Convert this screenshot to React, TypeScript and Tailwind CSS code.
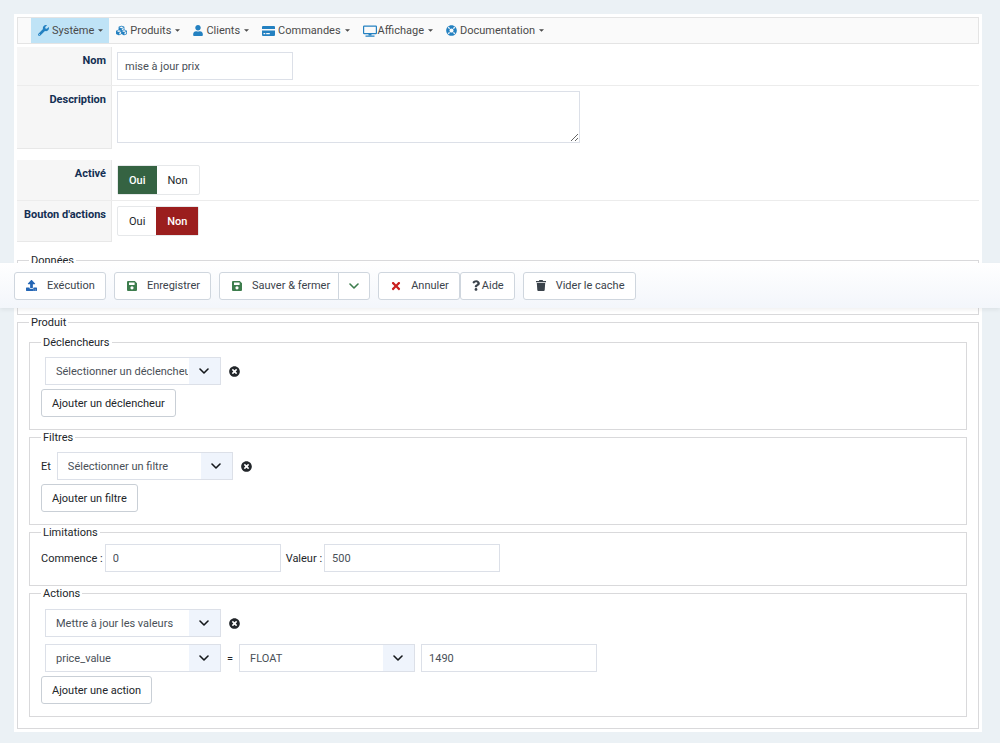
import type { ReactNode } from "react";
import { FaCubes, FaLifeRing, FaQuestion, FaTimes, FaTimesCircle, FaUpload, FaUser, FaWrench } from "react-icons/fa";

const CardIcon = () => (
  <svg viewBox="0 0 13 10" className="h-[10px] w-[13px]" fill="currentColor" aria-hidden="true">
    <path d="M1 0h11a1 1 0 0 1 1 1v2H0V1a1 1 0 0 1 1-1ZM0 4.600h13V9a1 1 0 0 1-1 1H1a1 1 0 0 1-1-1V4.600ZM1.500 7v1.200h1.800V7Zm2.700 0v1.200h3.600V7Z" fillRule="evenodd" />
  </svg>
);

const DisplayIcon = () => (
  <svg viewBox="0 0 14 12" className="h-3 w-[14px]" fill="none" stroke="currentColor" aria-hidden="true">
    <rect x="0.600" y="1.100" width="12.800" height="7.600" rx="0.600" strokeWidth="1.200" />
    <path d="M5.500 9.700h3M2.500 11.200h9" strokeWidth="1.300" />
  </svg>
);

const SaveIcon = () => (
  <svg viewBox="0 0 10 10" className="size-[10px] text-[#3d7d4d]" fill="currentColor" aria-hidden="true">
    <path fillRule="evenodd" d="M1 0h6.800L10 2.200V9a1 1 0 0 1-1 1H1a1 1 0 0 1-1-1V1a1 1 0 0 1 1-1Zm1 1.500v2.400h5.600V1.500ZM5 5.200a1.600 1.600 0 1 0 0 3.200 1.600 1.600 0 0 0 0-3.200Z" />
  </svg>
);

const TrashIcon = () => (
  <svg viewBox="0 0 10 11" className="h-[11px] w-[10px]" fill="currentColor" aria-hidden="true">
    <path d="M3.400 0h3.200l.5.900H10v1.300H0V.9h2.900ZM.8 3h8.400l-.5 7.100a1 1 0 0 1-1 .9H2.300a1 1 0 0 1-1-.9Z" />
  </svg>
);

const Chevron = ({ className }: { className: string }) => (
  <svg viewBox="0 0 10 6" className={className} fill="none" stroke="currentColor" strokeWidth="1.600" strokeLinecap="round" strokeLinejoin="round" aria-hidden="true">
    <path d="M1 1l4 4 4-4" />
  </svg>
);

function MenuItem({ icon, label, active, tight }: { icon: ReactNode; label: string; active?: boolean; tight?: boolean }) {
  return (
    <li className="flex">
      <a href="#" className={`flex items-center pr-[6px] pl-[7px] ${active ? "bg-[#bfe3f6]" : ""}`}>
        <span className={`text-[#2481c1] ${tight ? "mr-px" : "mr-[3px]"}`}>{icon}</span>
        {label}
        <svg viewBox="0 0 6 3" className="ml-1 h-[3px] w-[5px]" fill="currentColor" aria-hidden="true">
          <path d="M0 0h6L3 3z" />
        </svg>
      </a>
    </li>
  );
}

function Row({ label, htmlFor, last, children }: { label: string; htmlFor?: string; last?: boolean; children: ReactNode }) {
  const labelClass = "font-bold text-[#132f53]";
  return (
    <div className={`flex border-b ${last ? "border-transparent" : "border-[#ececec]"}`}>
      <div className={`w-[95px] shrink-0 border-r border-[#e8e8e8] bg-[#f6f6f6] pt-[6px] pr-[5px] text-right ${last ? "-mb-px border-b" : ""}`}>
        {htmlFor ? <label htmlFor={htmlFor} className={labelClass}>{label}</label> : <span className={labelClass}>{label}</span>}
      </div>
      <div className="grow px-[5px] py-[5px]">{children}</div>
    </div>
  );
}

function YesNo({ name, label, value }: { name: string; label: string; value: boolean }) {
  const base = "flex cursor-pointer items-center px-[11px] has-[:focus-visible]:outline-2";
  return (
    <div role="radiogroup" aria-label={label} className="flex h-[30px] w-fit rounded-[2px] border border-[#e6e8ea]">
      <label className={`${base} has-checked:bg-[#356342] has-checked:font-medium has-checked:text-white`}>
        <input type="radio" name={name} defaultChecked={value} className="sr-only" />
        Oui
      </label>
      <label className={`${base} has-checked:bg-[#9b1e1e] has-checked:font-medium has-checked:text-white`}>
        <input type="radio" name={name} defaultChecked={!value} className="sr-only" />
        Non
      </label>
    </div>
  );
}

const toolButton = "flex h-7 items-center rounded-[3px] border border-[#cfd6de] bg-white text-[#3b434b]";

function Group({ title, className, children }: { title: string; className: string; children?: ReactNode }) {
  return (
    <fieldset className={`min-w-0 border border-[#d9d9db] px-[11px] ${className}`}>
      <legend className="px-[2px]">{title}</legend>
      {children}
    </fieldset>
  );
}

function Select({ label, options }: { label: string; options: string[] }) {
  return (
    <div className="relative h-7 w-44 shrink-0">
      <select aria-label={label} className="h-full w-full appearance-none border border-[#dce0e8] bg-white pr-8 pl-[10px] text-[#495057]">
        {options.map((o) => (
          <option key={o}>{o}</option>
        ))}
      </select>
      <span className="pointer-events-none absolute inset-y-px right-px flex w-[31px] items-center bg-[#eff4fc] pl-[10px] text-[#15181b]">
        <Chevron className="h-[6px] w-[10px]" />
      </span>
    </div>
  );
}

const RemoveButton = () => (
  <button type="button" aria-label="Supprimer" className="ml-2">
    <FaTimesCircle className="size-[11px]" />
  </button>
);

const AddButton = ({ children }: { children: ReactNode }) => (
  <button type="button" className="mt-1 block h-7 rounded-[3px] border border-[#c9cfd6] bg-white px-[10px]">
    {children}
  </button>
);

const inputClass = "block h-7 w-44 border border-[#dce0e8] bg-white px-[7px] text-[#495057]";

export default function App() {
  return (
    <div className="relative min-h-screen bg-[#ebf1f5] pt-[14px] pr-[18px] pb-[11px] pl-[14px] font-['Roboto','Liberation_Sans',sans-serif] text-[11px] leading-[15px] text-[#22262a]">
      <main className="bg-white p-[3px]">
        <nav className="border border-[#e4e4e4] bg-[#fafafa] pl-[13px] text-[#4a4a4a]">
          <ul className="flex h-[25px]">
            <MenuItem active icon={<FaWrench className="size-[11px]" />} label="Système" />
            <MenuItem icon={<FaCubes className="size-[11px]" />} label="Produits" />
            <MenuItem icon={<FaUser className="h-[11px] w-[10px]" />} label="Clients" />
            <MenuItem icon={<CardIcon />} label="Commandes" />
            <MenuItem tight icon={<DisplayIcon />} label="Affichage" />
            <MenuItem icon={<FaLifeRing className="size-[11px]" />} label="Documentation" />
          </ul>
        </nav>

        <form onSubmit={(e) => e.preventDefault()}>
          <div className="mt-[3px]">
            <Row label="Nom" htmlFor="nom">
              <input id="nom" type="text" defaultValue="mise à jour prix" className={inputClass} />
            </Row>
            <Row label="Description" htmlFor="description" last>
              <textarea id="description" className="block h-[52px] w-[463px] max-w-full border border-[#dce0e8] bg-white p-[7px]" />
            </Row>
          </div>
          <div className="mt-[11px] mb-[11px]">
            <Row label="Activé">
              <YesNo name="active" label="Activé" value />
            </Row>
            <Row label="Bouton d'actions" last>
              <YesNo name="bouton" label="Bouton d'actions" value={false} />
            </Row>
          </div>

          <Group title="Données" className="h-[62px]" />

          <Group title="Produit" className="pt-[5px] pb-[11px]">
            <Group title="Déclencheurs" className="pt-[7px] pb-3">
              <div className="flex items-center pl-1">
                <Select label="Déclencheur" options={["Sélectionner un déclencheur"]} />
                <RemoveButton />
              </div>
              <AddButton>Ajouter un déclencheur</AddButton>
            </Group>

            <Group title="Filtres" className="pt-[7px] pb-3">
              <div className="flex items-center">
                <span className="mr-[6px]">Et</span>
                <Select label="Filtre" options={["Sélectionner un filtre"]} />
                <RemoveButton />
              </div>
              <AddButton>Ajouter un filtre</AddButton>
            </Group>

            <Group title="Limitations" className="pt-1 pb-[13px]">
              <div className="flex items-center gap-[2px]">
                <label htmlFor="commence">Commence :</label>
                <input id="commence" type="text" defaultValue="0" className={inputClass} />
                <label htmlFor="valeur" className="ml-[3px]">Valeur :</label>
                <input id="valeur" type="text" defaultValue="500" className={inputClass} />
              </div>
            </Group>

            <Group title="Actions" className="pt-2 pb-3">
              <div className="flex items-center pl-1">
                <Select label="Action" options={["Mettre à jour les valeurs"]} />
                <RemoveButton />
              </div>
              <div className="mt-[7px] flex items-center gap-[6px] pl-1">
                <Select label="Champ" options={["price_value"]} />
                <span>=</span>
                <Select label="Type" options={["FLOAT"]} />
                <input aria-label="Valeur du champ" type="text" defaultValue="1490" className={inputClass} />
              </div>
              <AddButton>Ajouter une action</AddButton>
            </Group>
          </Group>
        </form>
      </main>

      <div role="toolbar" aria-label="Actions de la page" className="absolute inset-x-0 top-[263px] flex h-[45px] items-center gap-2 bg-linear-to-b from-white to-[#f3f6fb] px-[14px] shadow-[0_2px_4px_rgba(0,0,0,0.06)]">
        <button type="button" className={`${toolButton} pr-[10px] pl-[11px]`}>
          <FaUpload className="mr-[10px] size-[11px] text-[#2466b5]" />
          Exécution
        </button>
        <button type="button" className={`${toolButton} pr-[10px] pl-3`}>
          <span className="mr-[10px]"><SaveIcon /></span>
          Enregistrer
        </button>
        <div className="flex">
          <button type="button" className={`${toolButton} rounded-r-none pr-2 pl-3`}>
            <span className="mr-[10px]"><SaveIcon /></span>
            Sauver &amp; fermer
          </button>
          <button type="button" aria-label="Plus d'options" className={`${toolButton} -ml-px w-8 justify-center rounded-l-none`}>
            <Chevron className="h-[6px] w-[10px] text-[#3d7d4d]" />
          </button>
        </div>
        <div className="flex">
          <button type="button" className={`${toolButton} pr-[10px] pl-[11px]`}>
            <FaTimes className="mr-[9px] size-3 text-[#c9201f]" />
            Annuler
          </button>
          <button type="button" className={`${toolButton} pr-[10px] pl-[11px]`}>
            <FaQuestion className="mr-[2px] h-[11px] w-2" />
            Aide
          </button>
        </div>
        <button type="button" className={`${toolButton} pr-[10px] pl-3`}>
          <span className="mr-[10px]"><TrashIcon /></span>
          Vider le cache
        </button>
      </div>
    </div>
  );
}
